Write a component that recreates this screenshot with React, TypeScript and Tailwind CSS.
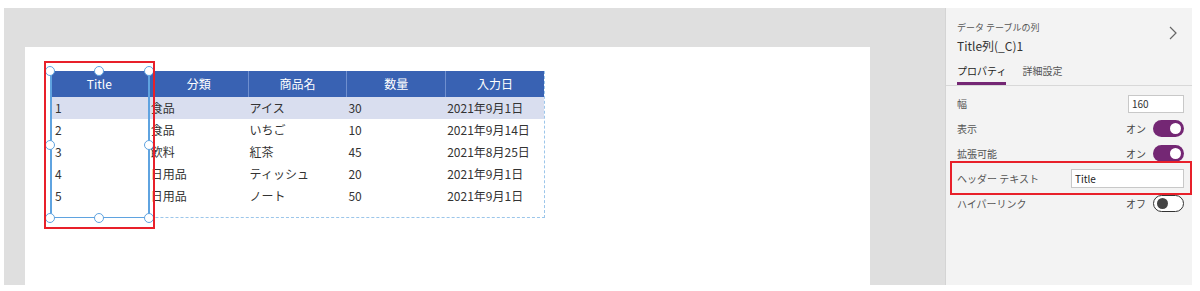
import React from 'react'

const columns = ['Title', '分類', '商品名', '数量', '入力日']

const rows = [
  ['1', '食品', 'アイス', '30', '2021年9月1日'],
  ['2', '食品', 'いちご', '10', '2021年9月14日'],
  ['3', '飲料', '紅茶', '45', '2021年8月25日'],
  ['4', '日用品', 'ティッシュ', '20', '2021年9月1日'],
  ['5', '日用品', 'ノート', '50', '2021年9月1日'],
]

const font = { fontFamily: '"Noto Sans CJK JP", "Noto Sans", sans-serif' }

// selection handle centres, relative to the canvas
const handles = [
  [25, 24], [74, 24], [124, 24],
  [25, 98], [124, 98],
  [25, 171], [74, 171], [124, 171],
]

function Toggle({ on }: { on: boolean }) {
  return on ? (
    <div className="w-[31px] h-[17px] rounded-full bg-[#742774] flex items-center justify-end pr-[3px]">
      <div className="w-[11px] h-[11px] rounded-full bg-white" />
    </div>
  ) : (
    <div className="w-[31px] h-[17px] rounded-full border border-[#333] bg-white flex items-center pl-[3px]">
      <div className="w-[11px] h-[11px] rounded-full bg-[#444]" />
    </div>
  )
}

function DataTable() {
  return (
    <div className="relative w-[845px] h-[238px] bg-white pl-[25px] pt-[24px]">
      <div className="w-[495px] h-[147px] border-r border-b border-dashed border-[#9cc6ea]">
        <div className="flex h-[26px] bg-[#3962b3]">
          {columns.map((c, i) => (
            <div
              key={c}
              className={`w-[99px] flex items-center justify-center text-white text-[12px] ${i > 0 ? 'border-l border-[#6f8fcf]' : ''}`}
            >
              {c}
            </div>
          ))}
        </div>
        {rows.map((r, ri) => (
          <div key={ri} className={`flex h-[22px] items-center ${ri === 0 ? 'bg-[#d9deef]' : ''}`}>
            {r.map((v, ci) => (
              <div key={ci} className={`w-[99px] text-[12px] text-[#333] ${ci === 0 ? 'pl-[5px]' : 'pl-[2px]'}`}>
                {v}
              </div>
            ))}
          </div>
        ))}
      </div>

      {/* selected column outline */}
      <div className="absolute left-[25px] top-[24px] w-[100px] h-[147px] border-x-2 border-b border-[#5fa3e0]" />
      {handles.map(([x, y], i) => (
        <div
          key={i}
          className="absolute w-[10px] h-[10px] rounded-full bg-white border-[1.5px] border-[#5fa3e0]"
          style={{ left: x - 5, top: y - 5 }}
        />
      ))}
      {/* red highlight */}
      <div className="absolute left-[19px] top-[14px] w-[111px] h-[168px] border-2 border-[#e8202a]" />
    </div>
  )
}

function PropRow({ label, children }: { label: string; children: React.ReactNode }) {
  return (
    <div className="flex items-center justify-between h-[25px] pr-[8px]">
      <span className="text-[10px] text-[#555]">{label}</span>
      {children}
    </div>
  )
}

function PropertyPanel() {
  return (
    <div className="w-[247px] h-[277px] bg-[#f3f3f3] border-l border-[#d4d4d4] flex flex-col">
      <div className="flex items-start justify-between pl-[11px] pr-[14px] pt-[13px]">
        <div>
          <div className="text-[9px] text-[#555] leading-[14px]">データ テーブルの列</div>
          <div className="text-[12px] text-[#333] leading-[16px] mt-[3px]">Title列(_C)1</div>
        </div>
        <svg width="10" height="16" viewBox="0 0 10 16" className="mt-[4px]">
          <path d="M2 2 L8 8 L2 14" fill="none" stroke="#666" strokeWidth="1.2" />
        </svg>
      </div>
      <div className="flex gap-[16px] pl-[11px] mt-[10px] border-b border-[#d8d8d8]">
        <div className="text-[10px] text-[#222] pb-[4px] border-b-[3px] border-[#742774] leading-[14px]">
          プロパティ
        </div>
        <div className="text-[10px] text-[#555] leading-[14px]">詳細設定</div>
      </div>
      <div className="pl-[11px] mt-[5px] flex flex-col">
        <PropRow label="幅">
          <div className="w-[56px] h-[18px] bg-white border border-[#c8c8c8] text-[10px] text-[#333] pl-[3px] flex items-center">
            160
          </div>
        </PropRow>
        <PropRow label="表示">
          <div className="flex items-center gap-[7px]">
            <span className="text-[10px] text-[#444]">オン</span>
            <Toggle on />
          </div>
        </PropRow>
        <PropRow label="拡張可能">
          <div className="flex items-center gap-[7px]">
            <span className="text-[10px] text-[#444]">オン</span>
            <Toggle on />
          </div>
        </PropRow>
        <div className="relative flex items-center h-[25px] pr-[8px]">
          <span className="text-[10px] text-[#555] w-[114px]">ヘッダー テキスト</span>
          <div className="flex-1 h-[19px] bg-white border border-[#c8c8c8] text-[10px] text-[#222] pl-[3px] flex items-center">
            Title
          </div>
          <div className="absolute left-[-7px] right-[0px] top-[-5px] bottom-[-4px] border-2 border-[#e8202a]" />
        </div>
        <PropRow label="ハイパーリンク">
          <div className="flex items-center gap-[7px]">
            <span className="text-[10px] text-[#444]">オフ</span>
            <Toggle on={false} />
          </div>
        </PropRow>
      </div>
    </div>
  )
}

export default function App() {
  return (
    <div className="w-[1200px] h-[291px] bg-white pt-[8px] pl-[4px]" style={font}>
      <div className="flex">
        <div className="w-[941px] h-[277px] bg-[#dfdfdf] pt-[39px] pl-[21px]">
          <DataTable />
        </div>
        <PropertyPanel />
      </div>
    </div>
  )
}
